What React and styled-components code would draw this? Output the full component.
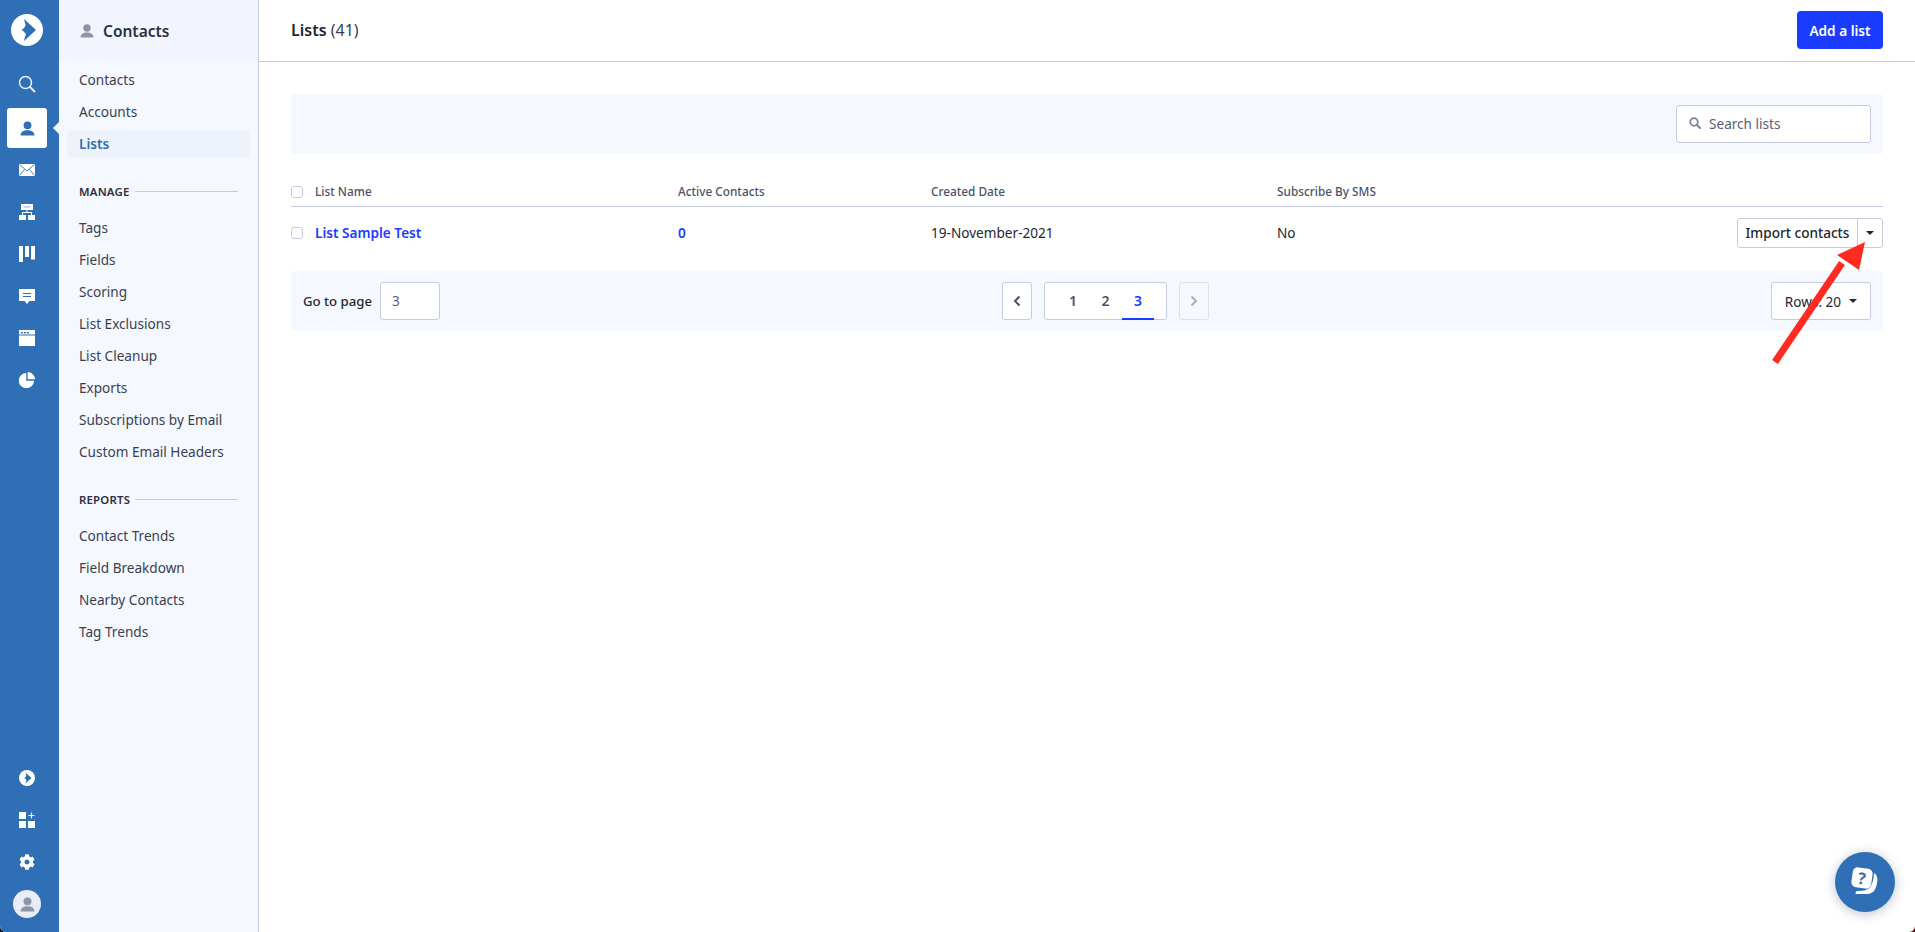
import React from "react";
import styled, { createGlobalStyle } from "styled-components";
import { FaCog } from "react-icons/fa";

const Global = createGlobalStyle`
  html, body { margin: 0; padding: 0; background: linear-gradient(90deg, #14121a 50%, #5e0c1c 50%); }
  body { font-family: "Noto Sans", "Liberation Sans", sans-serif; color: #2c3040; -webkit-font-smoothing: antialiased; }
  * { box-sizing: border-box; }
`;

const RAIL = "#2e6fb5";
const BLUE = "#1a3cff";
const LINE = "#c6cbe0";

const Shell = styled.div`
  position: relative;
  display: flex;
  width: 100%;
  height: 100vh;
  min-height: 932px;
  overflow: hidden;
  background: #fff;
  border-radius: 0 0 6px 6px;
`;

const Rail = styled.nav`
  flex: 0 0 59px;
  background: ${RAIL};
  display: flex;
  flex-direction: column;
  align-items: center;
  padding: 14px 5px 14px 0;
`;
const LogoSlot = styled.div`
  height: 32px;
  margin-bottom: 27px;
  display: flex;
  align-items: center;
`;
const RailItem = styled.div`
  position: relative;
  width: 40px;
  height: ${(p) => p.$h || 40}px;
  margin-top: ${(p) => p.$mt || 0}px;
  border-radius: 3px;
  display: flex;
  align-items: center;
  justify-content: center;
  background: ${(p) => (p.$active ? "#fff" : "transparent")};
  color: #fff;
  ${(p) =>
    p.$active &&
    `&::after {
      content: "";
      position: absolute;
      left: 46px;
      top: 14px;
      border: 6px solid transparent;
      border-left: 0;
      border-right: 6px solid #f5f8ff;
    }`}
`;
const RailSpacer = styled.div`
  flex: 1;
`;
const Avatar = styled.div`
  width: 28px;
  height: 28px;
  border-radius: 50%;
  background: #e9ecf4;
  display: flex;
  align-items: center;
  justify-content: center;
  margin-top: 20px;
`;

const Side = styled.aside`
  flex: 0 0 200px;
  background: #f5f8ff;
  border-right: 1px solid #c4cbdf;
  display: flex;
  flex-direction: column;
`;
const SideHead = styled.div`
  height: 61px;
  background: #f2f5fd;
  display: flex;
  align-items: center;
  gap: 9px;
  padding-left: 21px;
  font-size: 15.5px;
  font-weight: 600;
  color: #2c3040;
  margin-bottom: 3px;
`;
const SideList = styled.ul`
  list-style: none;
  margin: 0;
  padding: 0 8px;
`;
const SideLink = styled.li`
  height: 32px;
  line-height: 32px;
  padding-left: 12px;
  font-size: 13.6px;
  border-radius: 4px;
  color: ${(p) => (p.$active ? RAIL : "#3a3f50")};
  font-weight: ${(p) => (p.$active ? 600 : 400)};
  position: relative;
  ${(p) =>
    p.$active &&
    `&::before {
      content: "";
      position: absolute;
      z-index: 0;
      inset: 2px 0;
      background: #edf2fb;
      border-radius: 4px;
    }`}
`;
const LinkText = styled.span`
  position: relative;
`;
const SectionHead = styled.div`
  display: flex;
  align-items: center;
  gap: 5px;
  margin: ${(p) => p.$mt}px 20px ${(p) => p.$mb}px 20px;
  height: 16px;
  font-size: 11.4px;
  font-weight: 600;
  letter-spacing: 0.2px;
  color: #2c3040;
  &::after {
    content: "";
    flex: 1;
    height: 1px;
    background: #c4cbdf;
  }
`;

const Main = styled.main`
  flex: 1;
  min-width: 0;
  display: flex;
  flex-direction: column;
`;
const TopBar = styled.header`
  height: 62px;
  border-bottom: 1px solid ${LINE};
  display: flex;
  align-items: center;
  justify-content: space-between;
  padding: 0 32px 1px 32px;
`;
const Title = styled.h1`
  margin: 0;
  font-size: 16px;
  font-weight: 600;
  color: #23262f;
`;
const Count = styled.span`
  font-weight: 400;
  color: #3a3f50;
`;
const Primary = styled.button`
  width: 86px;
  height: 38px;
  background: ${BLUE};
  color: #fff;
  border: 0;
  border-radius: 4px;
  font: 600 13.6px "Noto Sans", sans-serif;
`;
const Content = styled.div`
  padding: 32px 32px 0 32px;
`;
const Band = styled.div`
  height: 60px;
  background: #f5f8ff;
  border-radius: 4px;
  padding: 0 12px;
  display: flex;
  align-items: center;
  justify-content: ${(p) => p.$justify || "space-between"};
`;
const SearchBox = styled.div`
  width: 195px;
  height: 38px;
  background: #fff;
  border: 1px solid ${LINE};
  border-radius: 3px;
  display: flex;
  align-items: center;
  gap: 8px;
  padding: 0 0 2px 12px;
  font-size: 13.6px;
  color: #5a6076;
`;

const COLS = "24px 363px 253px 346px 1fr auto";
const HeadRow = styled.div`
  margin-top: 24px;
  height: 29px;
  display: grid;
  grid-template-columns: ${COLS};
  align-items: center;
  border-bottom: 1px solid ${LINE};
  font-size: 11.8px;
  font-weight: 500;
  color: #4d5268;
`;
const BodyRow = styled.div`
  height: 52px;
  display: grid;
  grid-template-columns: ${COLS};
  align-items: center;
  font-size: 13.6px;
  color: #23262f;
  margin-bottom: 12px;
`;
const Cell = styled.span`
  padding-bottom: 2px;
  color: ${(p) => (p.$link ? BLUE : "inherit")};
  font-weight: ${(p) => (p.$link ? 600 : "inherit")};
`;
const Check = styled.span`
  display: block;
  width: 12px;
  height: 12px;
  background: #fff;
  border: 1px solid ${LINE};
  border-radius: 3px;
`;
const SplitButton = styled.div`
  display: flex;
  height: 30px;
  background: #fff;
  border: 1px solid ${LINE};
  border-radius: 3px;
  font-weight: 500;
  font-size: 13.6px;
  color: #23262f;
`;
const SplitLabel = styled.span`
  display: flex;
  align-items: center;
  justify-content: center;
  width: 120px;
  padding-bottom: 1px;
  border-right: 1px solid ${LINE};
`;
const SplitCaret = styled.span`
  width: 24px;
  display: flex;
  align-items: center;
  justify-content: center;
`;
const Caret = styled.span`
  display: block;
  width: 0;
  height: 0;
  border: 4px solid transparent;
  border-top-color: #23262f;
  border-bottom: 0;
`;
const GoTo = styled.div`
  display: flex;
  align-items: center;
  gap: 8px;
  font-size: 13.2px;
  font-weight: 500;
  color: #23262f;
`;
const PageInput = styled.div`
  width: 60px;
  height: 38px;
  background: #fff;
  border: 1px solid ${LINE};
  border-radius: 3px;
  display: flex;
  align-items: center;
  padding: 0 0 2px 11px;
  font-size: 13.6px;
  font-weight: 400;
  color: #5a6076;
`;
const Pager = styled.div`
  display: flex;
  align-items: center;
  gap: 12px;
`;
const Arrow = styled.div`
  width: 30px;
  height: 38px;
  background: ${(p) => (p.$off ? "#f5f8ff" : "#fff")};
  border: 1px solid ${(p) => (p.$off ? "#dde1ef" : LINE)};
  border-radius: 3px;
  display: flex;
  align-items: center;
  justify-content: center;
`;
const Pages = styled.div`
  width: 123px;
  height: 38px;
  background: #fff;
  border: 1px solid ${LINE};
  border-radius: 3px;
  display: flex;
  justify-content: center;
`;
const PageNum = styled.span`
  width: 32.5px;
  height: 37px;
  display: flex;
  align-items: center;
  justify-content: center;
  font-size: 14px;
  font-weight: 600;
  color: ${(p) => (p.$on ? BLUE : "#4d5268")};
  border-bottom: 2px solid ${(p) => (p.$on ? BLUE : "transparent")};
`;
const RowsButton = styled.div`
  width: 100px;
  height: 38px;
  background: #fff;
  border: 1px solid ${LINE};
  border-radius: 3px;
  display: flex;
  align-items: center;
  justify-content: center;
  gap: 8px;
  font-size: 13.6px;
  color: #23262f;
`;
const Annotation = styled.svg`
  position: absolute;
  left: 1760px;
  top: 232px;
  pointer-events: none;
`;
const Help = styled.div`
  position: absolute;
  left: 1835px;
  top: 852px;
  width: 60px;
  height: 60px;
  border-radius: 50%;
  background: ${RAIL};
  box-shadow: 0 2px 12px rgba(30, 40, 80, 0.28);
  display: flex;
  align-items: center;
  justify-content: center;
`;

const Icon = ({ children, w = 18, h = 18, ...r }) => (
  <svg width={w} height={h} viewBox={`0 0 ${w} ${h}`} {...r}>
    {children}
  </svg>
);

const Mark = ({ size, bg, fg }) => (
  <svg width={size} height={size} viewBox="0 0 32 32">
    <circle cx="16" cy="16" r="16" fill={bg} />
    <path d="M13 5 L25 16 L13 27 C13.5 24 14 22.5 15 20.5 C14 18.5 12.5 17 10.5 16 C12.5 15 14 13 14.6 11 C14 9 13.5 7.5 13 5 Z" fill={fg} />
  </svg>
);

const Person = ({ color, size = 16 }) => (
  <svg width={size} height={size} viewBox="0 0 16 16">
    <circle cx="8" cy="4.6" r="4.2" fill={color} />
    <path d="M0.6 15.5 C0.6 11.6 3.6 9.8 8 9.8 C12.4 9.8 15.4 11.6 15.4 15.5 Z" fill={color} />
  </svg>
);

const SIDE_MAIN = ["Contacts", "Accounts", "Lists"];
const SIDE_MANAGE = ["Tags", "Fields", "Scoring", "List Exclusions", "List Cleanup", "Exports", "Subscriptions by Email", "Custom Email Headers"];
const SIDE_REPORTS = ["Contact Trends", "Field Breakdown", "Nearby Contacts", "Tag Trends"];

export default function App() {
  return (
    <Shell>
      <Global />
      <Rail>
        <LogoSlot>
          <Mark size={32} bg="#fff" fg={RAIL} />
        </LogoSlot>
        <RailItem $h={22}>
          <Icon w={18} h={18}>
            <circle cx="7.5" cy="7.5" r="6" fill="none" stroke="#eef3fd" strokeWidth="1.5" />
            <path d="M12 12 L16.5 16.5" stroke="#eef3fd" strokeWidth="1.8" strokeLinecap="round" />
          </Icon>
        </RailItem>
        <RailItem $active $mt={13}>
          <Person color={RAIL} size={15} />
        </RailItem>
        <RailItem $h={16} $mt={14}>
          <Icon w={16} h={12}>
            <rect width="16" height="12" fill="#fff" />
            <path d="M0.5 0.5 L8 7 L15.5 0.5 M0.5 11.5 L5.5 5.5 M15.5 11.5 L10.5 5.5" fill="none" stroke={RAIL} strokeWidth="0.9" />
          </Icon>
        </RailItem>
        <RailItem $h={16} $mt={26}>
          <Icon w={16} h={16}>
            <rect x="2" y="0" width="12" height="6" fill="#fff" />
            <rect x="4.5" y="2.3" width="7" height="1.2" fill="#9dbde2" />
            <path d="M8 6 V8.5 M3.5 11 V8.5 H12.5 V11" fill="none" stroke="#fff" strokeWidth="1" />
            <rect x="0" y="11" width="7" height="5" fill="#fff" />
            <rect x="9" y="11" width="7" height="5" fill="#fff" />
          </Icon>
        </RailItem>
        <RailItem $h={16} $mt={26}>
          <Icon w={16} h={16}>
            <rect x="0" y="0" width="4" height="16" fill="#fff" />
            <rect x="6" y="0" width="4" height="11" fill="#fff" />
            <rect x="12" y="0" width="4" height="13.5" fill="#fff" />
          </Icon>
        </RailItem>
        <RailItem $h={16} $mt={26}>
          <Icon w={16} h={15}>
            <path d="M0 0 H16 V12 H10.5 L8 15 L5.5 12 H0 Z" fill="#fff" />
            <path d="M4 4.5 H12 M4 7.5 H12" stroke={RAIL} strokeWidth="1" />
          </Icon>
        </RailItem>
        <RailItem $h={16} $mt={26}>
          <Icon w={16} h={16}>
            <rect width="16" height="16" fill="#fff" />
            <rect x="0" y="4.5" width="16" height="1" fill={RAIL} />
            <rect x="2" y="2" width="2" height="1.4" fill={RAIL} />
            <rect x="5" y="2" width="2" height="1.4" fill={RAIL} />
            <rect x="8" y="2" width="2" height="1.4" fill={RAIL} />
          </Icon>
        </RailItem>
        <RailItem $h={16} $mt={26}>
          <Icon w={16} h={16}>
            <path d="M7.3 1 A7.6 7.6 0 1 0 15 8.7 H7.3 Z" fill="#fff" />
            <path d="M8.7 0 A7.6 7.6 0 0 1 16 7.3 H8.7 Z" fill="#fff" />
          </Icon>
        </RailItem>
        <RailSpacer />
        <RailItem $h={16}>
          <Mark size={16} bg="#fff" fg={RAIL} />
        </RailItem>
        <RailItem $h={16} $mt={26}>
          <Icon w={16} h={16}>
            <rect x="0" y="0" width="7" height="7" fill="#fff" />
            <rect x="0" y="9" width="7" height="7" fill="#fff" />
            <rect x="9" y="9" width="7" height="7" fill="#fff" />
            <path d="M12.5 0.5 V6.5 M9.5 3.5 H15.5" stroke="#fff" strokeWidth="1.2" />
          </Icon>
        </RailItem>
        <RailItem $h={16} $mt={26}>
          <FaCog size={16} color="#fff" />
        </RailItem>
        <Avatar>
          <Person color="#8f95a8" size={15} />
        </Avatar>
      </Rail>

      <Side>
        <SideHead>
          <Person color="#8f95a8" size={14} />
          Contacts
        </SideHead>
        <SideList>
          {SIDE_MAIN.map((t) => (
            <SideLink key={t} $active={t === "Lists"}>
              <LinkText>{t}</LinkText>
            </SideLink>
          ))}
        </SideList>
        <SectionHead $mt={23} $mb={13}>MANAGE</SectionHead>
        <SideList>
          {SIDE_MANAGE.map((t) => (
            <SideLink key={t}>{t}</SideLink>
          ))}
        </SideList>
        <SectionHead $mt={23} $mb={13}>REPORTS</SectionHead>
        <SideList>
          {SIDE_REPORTS.map((t) => (
            <SideLink key={t}>{t}</SideLink>
          ))}
        </SideList>
      </Side>

      <Main>
        <TopBar>
          <Title>
            Lists <Count>(41)</Count>
          </Title>
          <Primary>Add a list</Primary>
        </TopBar>
        <Content>
          <Band $justify="flex-end">
            <SearchBox>
              <Icon w={12} h={12}>
                <circle cx="5" cy="5" r="3.8" fill="none" stroke="#7d8499" strokeWidth="1.7" />
                <path d="M8 8 L11 11" stroke="#7d8499" strokeWidth="1.9" strokeLinecap="round" />
              </Icon>
              Search lists
            </SearchBox>
          </Band>
          <HeadRow>
            <Check />
            <Cell>List Name</Cell>
            <Cell>Active Contacts</Cell>
            <Cell>Created Date</Cell>
            <Cell>Subscribe By SMS</Cell>
            <span />
          </HeadRow>
          <BodyRow>
            <Check />
            <Cell $link>List Sample Test</Cell>
            <Cell $link>0</Cell>
            <Cell>19-November-2021</Cell>
            <Cell>No</Cell>
            <SplitButton>
              <SplitLabel>Import contacts</SplitLabel>
              <SplitCaret>
                <Caret />
              </SplitCaret>
            </SplitButton>
          </BodyRow>
          <Band>
            <GoTo>
              Go to page
              <PageInput>3</PageInput>
            </GoTo>
            <Pager>
              <Arrow>
                <Icon w={10} h={12}>
                  <path d="M7.5 1.5 L3 6 L7.5 10.5" fill="none" stroke="#4d5268" strokeWidth="2" />
                </Icon>
              </Arrow>
              <Pages>
                <PageNum>1</PageNum>
                <PageNum>2</PageNum>
                <PageNum $on>3</PageNum>
              </Pages>
              <Arrow $off>
                <Icon w={10} h={12}>
                  <path d="M2.5 1.5 L7 6 L2.5 10.5" fill="none" stroke="#a9aebf" strokeWidth="2" />
                </Icon>
              </Arrow>
            </Pager>
            <RowsButton>
              Rows: 20
              <Caret />
            </RowsButton>
          </Band>
        </Content>
      </Main>

      <Annotation width="120" height="145" viewBox="0 0 120 145">
        <path d="M15 130 L82 31" stroke="#ff2a20" strokeWidth="7" />
        <path d="M105 10 L77 23 L99 38 Z" fill="#ff2a20" />
      </Annotation>

      <Help>
        <svg width="32" height="32" viewBox="0 0 32 32">
          <path d="M25 7 C28 9 29 12 28 17 C27 23 25 27 19 28 L8 28 C6 28 6 26 8 25 C15 25 20 24 22 20 C24 16 25 11 25 7 Z" fill="#fff" />
          <g transform="rotate(8 13 12)">
            <rect x="3" y="2" width="20" height="20" rx="5" fill="#fff" />
            <text x="13" y="18" fontSize="16" fontWeight="700" fontFamily="Noto Sans, sans-serif" textAnchor="middle" fill={RAIL}>?</text>
          </g>
        </svg>
      </Help>
    </Shell>
  );
}
